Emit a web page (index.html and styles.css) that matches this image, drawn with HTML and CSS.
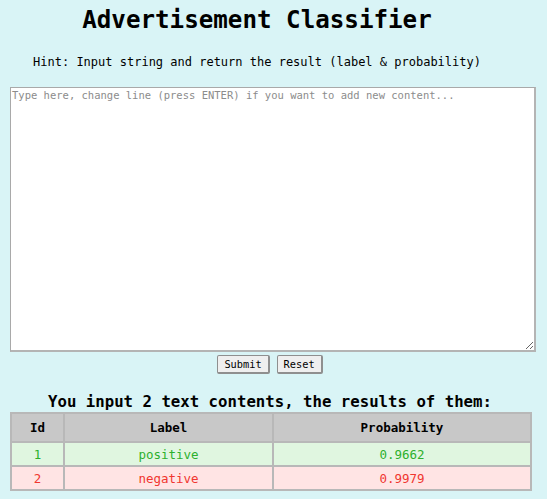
FILE: index.html
```html
<!DOCTYPE html>
<html>
<head>
<meta charset="utf-8">
<link rel="stylesheet" href="styles.css">
</head>
<body>
<div class="page">
  <h1 class="title">Advertisement Classifier</h1>
  <p class="hint">Hint: Input string and return the result (label &amp; probability)</p>
  <textarea class="input" placeholder="Type here, change line (press ENTER) if you want to add new content..."></textarea>
  <div class="actions">
    <button class="btn btn-submit">Submit</button>
    <button class="btn btn-reset">Reset</button>
  </div>
  <h2 class="result-title">You input 2 text contents, the results of them:</h2>
  <table class="results">
    <colgroup>
      <col class="col-id">
      <col class="col-label">
      <col class="col-prob">
    </colgroup>
    <thead>
      <tr><th>Id</th><th>Label</th><th>Probability</th></tr>
    </thead>
    <tbody>
      <tr class="pos"><td>1</td><td>positive</td><td>0.9662</td></tr>
      <tr class="neg"><td>2</td><td>negative</td><td>0.9979</td></tr>
    </tbody>
  </table>
</div>
</body>
</html>
```
FILE: styles.css
```css
html, body {
  margin: 0;
  padding: 0;
  background: #d9f4f6;
}
body {
  font-family: "DejaVu Sans Mono", "Liberation Mono", monospace;
  color: #000;
}
.page {
  padding: 0 10px;
  width: 526px;
}
.title {
  margin: 6px 32px 0 0;
  font-size: 24.2px;
  line-height: 28px;
  font-weight: bold;
  text-align: center;
}
.hint {
  margin: 21px 32px 0 0;
  font-size: 12px;
  line-height: 14px;
  text-align: center;
}
.input {
  display: block;
  margin: 18px 0 0 0;
  width: 526px;
  height: 265px;
  box-sizing: border-box;
  border-style: solid;
  border-width: 1px 2px 2px 1px;
  border-color: #a9a9a9 #b4b4b4 #b4b4b4 #a9a9a9;
  background: #fff;
  padding: 1px 1px;
  font-family: "DejaVu Sans Mono", "Liberation Mono", monospace;
  font-size: 10.5px;
  line-height: 13px;
  resize: vertical;
  outline: none;
}
.input::placeholder {
  color: #8c8c8c;
}
.actions {
  width: 520px;
  margin-top: 3px;
  display: flex;
  justify-content: center;
  gap: 7px;
}
.btn {
  height: 19px;
  box-sizing: border-box;
  padding: 0 6px;
  font-family: "DejaVu Sans Mono", "Liberation Mono", monospace;
  font-size: 10.3px;
  line-height: 15px;
  background: #efefef;
  border: 1px solid #8f8f8f;
  border-right-width: 2px;
  border-bottom-width: 2px;
  border-radius: 2px;
  color: #000;
}
.result-title {
  width: 520px;
  margin: 19px 0 1px 0;
  font-size: 15.7px;
  line-height: 18px;
  font-weight: bold;
  text-align: center;
}
.results {
  width: 520px;
  table-layout: fixed;
  border-collapse: collapse;
  font-size: 12.5px;
  text-align: center;
}
.col-id { width: 53px; }
.col-label { width: 209px; }
.col-prob { width: 258px; }
.results th, .results td {
  border: 2px solid #b8b8b8;
  padding: 0;
}
.results th {
  background: #c8c8c8;
  height: 27px;
  font-weight: bold;
}
.results td {
  height: 22px;
}
.pos td {
  background: #e0f6e0;
  color: #2db02d;
}
.neg td {
  background: #ffe4e4;
  color: #f0362f;
}
```
